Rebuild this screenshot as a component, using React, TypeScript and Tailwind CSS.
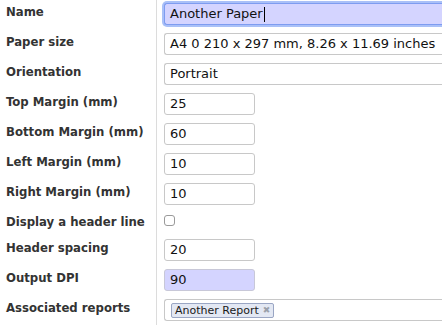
import React from "react";

const labelFont = { fontFamily: '"DejaVu Sans Condensed", "DejaVu Sans", sans-serif' };

type Row = {
  label: string;
  kind: "wide" | "short" | "check" | "tags";
  value?: string;
  focus?: boolean;
  tint?: boolean;
};

const rows: Row[] = [
  { label: "Name", kind: "wide", value: "Another Paper", focus: true },
  { label: "Paper size", kind: "wide", value: "A4 0 210 x 297 mm, 8.26 x 11.69 inches" },
  { label: "Orientation", kind: "wide", value: "Portrait" },
  { label: "Top Margin (mm)", kind: "short", value: "25" },
  { label: "Bottom Margin (mm)", kind: "short", value: "60" },
  { label: "Left Margin (mm)", kind: "short", value: "10" },
  { label: "Right Margin (mm)", kind: "short", value: "10" },
  { label: "Display a header line", kind: "check" },
  { label: "Header spacing", kind: "short", value: "20" },
  { label: "Output DPI", kind: "short", value: "90", tint: true },
  { label: "Associated reports", kind: "tags" },
];

const Field: React.FC<{ row: Row }> = ({ row }) => {
  if (row.kind === "check") {
    return (
      <div className="mt-[5px] h-[11px] w-[11px] rounded-[3px] border border-[#9a9a9a] bg-white" />
    );
  }
  if (row.kind === "tags") {
    return (
      <div className="mt-[3px] flex h-[22px] items-center rounded-l-[3px] border border-r-0 border-[#c8c8c8] bg-white pl-[6px]">
        <span className="flex h-[15px] items-center gap-[4px] rounded-[2px] border border-[#9aa6c4] bg-[#e3e8f3] px-[3px] text-[11px] leading-none text-[#1a1a1a]">
          Another Report
          <span className="text-[9px] text-[#9aa0aa]">✖</span>
        </span>
      </div>
    );
  }
  const wide = row.kind === "wide";
  let box = "border-[#c8c8c8] bg-white";
  if (row.focus) box = "border-[#7e9cf0] bg-[#d4d4ff] shadow-[0_0_0_2px_#a9c0f8]";
  if (row.tint) box = "border-[#c8c8d8] bg-[#d4d4ff]";
  return (
    <div
      className={`mt-[3px] flex h-[22px] items-center border px-[5px] text-[13px] text-[#111] ${
        wide ? "rounded-l-[3px] border-r-0" : "w-[91px] rounded-[3px]"
      } ${box}`}
    >
      {row.value}
      {row.focus && <span className="ml-[1px] h-[15px] w-[1px] bg-black" />}
    </div>
  );
};

export default function App() {
  return (
    <div
      className="h-[325px] w-[442px] overflow-hidden bg-white"
      style={{ fontFamily: '"DejaVu Sans", sans-serif' }}
    >
      {rows.map((row) => (
        <div
          key={row.label}
          className={`flex ${row.kind === "check" ? "h-[26px]" : "h-[30px]"}`}
        >
          <div
            className="w-[157px] shrink-0 border-r border-[#dcdcdc] pl-[6px] pt-[3px] text-[13px] font-bold leading-[18px] text-[#333]"
            style={labelFont}
          >
            {row.label}
          </div>
          <div className="flex-1 pl-[7px]">
            <Field row={row} />
          </div>
        </div>
      ))}
    </div>
  );
}
